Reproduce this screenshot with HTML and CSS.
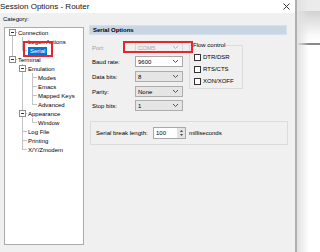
FILE: index.html
```html
<!DOCTYPE html>
<html>
<head>
    <title>Session Options - Router</title>
    <link rel="stylesheet" href="styles.css">
</head>
<body>
    <div class="dialog">
        <div class="titlebar">
            <span class="title">Session Options - Router</span>
            <svg class="close" width="7" height="7" viewBox="0 0 7 7"><path d="M0.5 0.5L6.5 6.5M6.5 0.5L0.5 6.5" stroke="#333" stroke-width="1"/></svg>
        </div>
        <div class="content">
            <div class="side">
                <div class="caption">Category:</div>
                <div class="treebox">
                    <ul class="tree">
                        <li><span class="node branch"><i class="box"></i>Connection</span>
                            <ul>
                                <li><span class="node">Logon Actions</span></li>
                                <li><span class="node"><span class="sel">Serial</span><span class="mark mark-serial"></span></span></li>
                            </ul>
                        </li>
                        <li><span class="node branch"><i class="box"></i>Terminal</span>
                            <ul>
                                <li><span class="node branch"><i class="box"></i>Emulation</span>
                                    <ul>
                                        <li><span class="node">Modes</span></li>
                                        <li><span class="node">Emacs</span></li>
                                        <li><span class="node">Mapped Keys</span></li>
                                        <li><span class="node">Advanced</span></li>
                                    </ul>
                                </li>
                                <li><span class="node branch"><i class="box"></i>Appearance</span>
                                    <ul>
                                        <li><span class="node">Window</span></li>
                                    </ul>
                                </li>
                                <li><span class="node">Log File</span></li>
                                <li><span class="node">Printing</span></li>
                                <li><span class="node">X/Y/Zmodem</span></li>
                            </ul>
                        </li>
                    </ul>
                </div>
            </div>
            <div class="panel">
                <div class="panel-head">Serial Options</div>
                <div class="settings">
                    <div class="fields">
                        <div class="field disabled">
                            <label>Port:</label>
                            <span class="combo">COM5<svg class="arrow" width="5" height="3" viewBox="0 0 5 3"><path d="M0 0L2.5 2.5L5 0" fill="none" stroke="#b5b5b5"/></svg></span>
                            <span class="mark mark-port"></span>
                        </div>
                        <div class="field">
                            <label>Baud rate:</label>
                            <span class="combo edit">9600<svg class="arrow" width="5" height="3" viewBox="0 0 5 3"><path d="M0 0L2.5 2.5L5 0" fill="none" stroke="#555"/></svg></span>
                        </div>
                        <div class="field">
                            <label>Data bits:</label>
                            <span class="combo">8<svg class="arrow" width="5" height="3" viewBox="0 0 5 3"><path d="M0 0L2.5 2.5L5 0" fill="none" stroke="#555"/></svg></span>
                        </div>
                        <div class="field">
                            <label>Parity:</label>
                            <span class="combo">None<svg class="arrow" width="5" height="3" viewBox="0 0 5 3"><path d="M0 0L2.5 2.5L5 0" fill="none" stroke="#555"/></svg></span>
                        </div>
                        <div class="field">
                            <label>Stop bits:</label>
                            <span class="combo">1<svg class="arrow" width="5" height="3" viewBox="0 0 5 3"><path d="M0 0L2.5 2.5L5 0" fill="none" stroke="#555"/></svg></span>
                        </div>
                    </div>
                    <fieldset class="flow">
                        <legend>Flow control</legend>
                        <label class="check"><input type="checkbox">DTR/DSR</label>
                        <label class="check"><input type="checkbox">RTS/CTS</label>
                        <label class="check"><input type="checkbox">XON/XOFF</label>
                    </fieldset>
                </div>
                <div class="break-group">
                    <span class="break-label">Serial break length:</span>
                    <span class="spin">
                        <span class="spin-val">100</span>
                        <span class="spin-btns">
                            <svg width="3" height="2" viewBox="0 0 3 2"><path d="M0 2L1.5 0L3 2Z" fill="#444"/></svg>
                            <svg width="3" height="2" viewBox="0 0 3 2"><path d="M0 0L1.5 2L3 0Z" fill="#444"/></svg>
                        </span>
                    </span>
                    <span class="unit">milliseconds</span>
                </div>
            </div>
        </div>
    </div>
    <div class="behind"></div>
</body>
</html>
```

FILE: styles.css
```css
* {
    box-sizing: border-box;
}
body {
    margin: 0;
    width: 320px;
    height: 252px;
    overflow: hidden;
    display: flex;
    background: #fff;
    font-family: "Liberation Sans", Arial, sans-serif;
    font-size: 6px;
    color: #000;
}
.dialog {
    width: 297px;
    height: 252px;
    display: flex;
    flex-direction: column;
    background: #f0f0f0;
    border-right: 2px solid #b0b0b0;
}
.titlebar {
    height: 13px;
    background: #fff;
    display: flex;
    align-items: center;
    justify-content: space-between;
    padding-right: 5px;
}
.title {
    font-size: 8px;
    color: #111;
}
.content {
    flex: 1;
    display: flex;
}

/* category tree */
.side {
    width: 89px;
    padding-left: 3px;
}
.caption {
    padding-top: 2px;
    line-height: 9px;
}
.treebox {
    margin: 3px 0 0 1px;
    width: 80px;
    height: 218px;
    background: #fff;
    border: 1px solid #ababab;
}
.tree, .tree ul {
    list-style: none;
    margin: 0;
    padding: 0;
}
.tree {
    padding-left: 2px;
}
.tree ul {
    padding-left: 10px;
}
.tree li {
    position: relative;
}
.tree li::before {
    content: "";
    position: absolute;
    left: 5px;
    top: 0;
    bottom: 0;
    border-left: 1px solid #c4c4c4;
}
.tree li:last-child::before {
    bottom: auto;
    height: 5px;
}
.tree > li:first-child::before {
    top: 4px;
    bottom: 0;
}
.node {
    position: relative;
    display: flex;
    align-items: center;
    height: 9px;
    padding-left: 11px;
    white-space: nowrap;
}
.node::before {
    content: "";
    position: absolute;
    left: 5px;
    top: 4px;
    width: 5px;
    border-top: 1px solid #c4c4c4;
}
.node.branch {
    padding-left: 2px;
}
.box {
    position: relative;
    z-index: 1;
    width: 7px;
    height: 7px;
    margin-right: 2px;
    border: 1px solid #8e8e8e;
    background: #fff;
}
.box::after {
    content: "";
    position: absolute;
    left: 1px;
    top: 2px;
    width: 3px;
    height: 1px;
    background: #333;
}
.sel {
    background: #0a74d6;
    color: #fff;
    padding: 0 2px;
    line-height: 8px;
}
.mark {
    position: absolute;
    border: 2px solid #e5262b;
    z-index: 2;
}
.mark-serial {
    left: 6px;
    top: -5px;
    width: 30px;
    height: 16px;
}

/* serial options */
.panel {
    width: 206px;
    padding-right: 8px;
}
.panel-head {
    margin-top: 12px;
    height: 10px;
    line-height: 8px;
    padding-left: 3px;
    background: #c8d5e2;
    border: 1px solid #d6e0ea;
    font-weight: bold;
}
.settings {
    display: flex;
    margin-top: 7px;
}
.fields {
    width: 100px;
    padding-left: 3px;
}
.field {
    position: relative;
    display: flex;
    align-items: center;
    height: 11px;
    margin-bottom: 3px;
}
.field:nth-child(2), .field:nth-child(3) {
    margin-bottom: 4px;
}
.field label {
    width: 43px;
}
.field.disabled label {
    color: #a0a0a0;
}
.combo {
    display: flex;
    align-items: center;
    justify-content: space-between;
    width: 48px;
    height: 11px;
    padding: 0 4px 0 2px;
    background: #e5e5e5;
    border: 1px solid #adadad;
}
.combo.edit {
    background: #fff;
    border-color: #a8a8a8;
}
.field.disabled .combo {
    background: #f0f0f0;
    border-color: #d8d8d8;
    color: #a6a6a6;
}
.mark-port {
    left: 31px;
    top: -1px;
    width: 70px;
    height: 12px;
}
.flow {
    margin: 0 0 0 0;
    width: 54px;
    height: 47px;
    padding: 2px 0 0 4px;
    border: 1px solid #dcdcdc;
}
.flow legend {
    padding: 0;
    margin-left: -1px;
    line-height: 7px;
}
.check {
    display: flex;
    align-items: center;
    height: 12px;
}
.check input {
    appearance: none;
    width: 7px;
    height: 7px;
    margin: 0 2px 0 0;
    border: 1px solid #333;
    background: #fff;
}
.break-group {
    display: flex;
    align-items: center;
    margin: 7px 0 0 1px;
    width: 198px;
    height: 24px;
    padding-left: 5px;
    border: 1px solid #dcdcdc;
}
.break-label {
    width: 57px;
}
.spin {
    display: flex;
    height: 12px;
    border: 1px solid #a8a8a8;
}
.spin-val {
    width: 23px;
    padding-left: 2px;
    line-height: 10px;
    background: #fff;
}
.spin-btns {
    width: 8px;
    display: flex;
    flex-direction: column;
    align-items: center;
    justify-content: center;
    gap: 2px;
    background: #e3e3e3;
}
.unit {
    margin-left: 3px;
}

/* window behind the dialog */
.behind {
    flex: 1;
    background:
        linear-gradient(to right, #e2e2e2, rgba(255, 255, 255, 0) 12px),
        linear-gradient(to bottom, #ebebeb 0, #ebebeb 11px, #d2d2d2 11px, #f9f9f9 35px, #fff 43px, #8a8a8a 43px, #8a8a8a 45px, #fff 45px);
}
```
